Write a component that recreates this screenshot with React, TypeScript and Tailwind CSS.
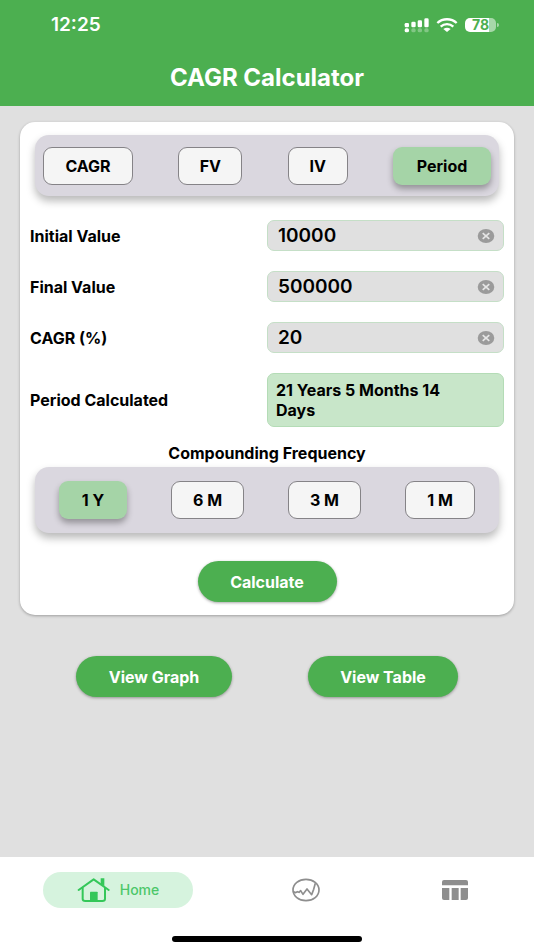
import { useState } from "react";

const fields = [
  { id: "initial", label: "Initial Value", value: "10000" },
  { id: "final", label: "Final Value", value: "500000" },
  { id: "rate", label: "CAGR (%)", value: "20" },
];

const modes = [
  { label: "CAGR", width: "w-[90px]" },
  { label: "FV", width: "w-16" },
  { label: "IV", width: "w-[60px]" },
  { label: "Period", width: "w-[98px]" },
];

const frequencies = [
  { label: "1 Y", width: "w-[68px]" },
  { label: "6 M", width: "w-[73px]" },
  { label: "3 M", width: "w-[73px]" },
  { label: "1 M", width: "w-[70px]" },
];

const panel =
  "flex rounded-[14px] bg-[#dad7df] shadow-[0_5px_8px_rgba(0,0,0,0.28)]";

function Choice({
  label,
  width,
  selected,
  onSelect,
}: {
  label: string;
  width: string;
  selected: boolean;
  onSelect: () => void;
}) {
  const look = selected
    ? "bg-[#a5d4a7] shadow-[0_4px_6px_rgba(0,0,0,0.32)]"
    : "border border-[#858387] bg-[#f5f5f5]";
  return (
    <button
      type="button"
      aria-pressed={selected}
      onClick={onSelect}
      className={`h-[38px] rounded-[9px] ${width} ${look}`}
    >
      {label}
    </button>
  );
}

function Action({ label, width }: { label: string; width: string }) {
  return (
    <button
      type="button"
      className={`h-[41px] rounded-full bg-[#4caf50] text-white shadow-[0_1px_3px_rgba(0,0,0,0.35)] ${width}`}
    >
      {label}
    </button>
  );
}

function Field({ id, label, value }: { id: string; label: string; value: string }) {
  const [text, setText] = useState(value);
  return (
    <div className="grid grid-cols-2 items-center">
      <label htmlFor={id}>{label}</label>
      <div className="flex h-[31px] items-center rounded-[7px] border border-[#c5dfc7] bg-[#e0e0e0] pr-2 pl-[10px]">
        <input
          id={id}
          value={text}
          onChange={(e) => setText(e.target.value)}
          className="w-full min-w-0 bg-transparent text-[19px] leading-6 font-semibold outline-none"
        />
        <button type="button" aria-label={`Clear ${label}`} onClick={() => setText("")}>
          <svg width="18" height="14" viewBox="0 0 18 14">
            <ellipse cx="9" cy="7" rx="8.3" ry="6.9" fill="#9b9b9b" />
            <path d="M5.7 4.2l6.6 5.6M12.3 4.2L5.7 9.8" stroke="#e6e6e6" strokeWidth="1.7" />
          </svg>
        </button>
      </div>
    </div>
  );
}

function StatusBar() {
  return (
    <div className="flex h-[50px] items-center justify-between pr-[35px] pl-[51px] text-white">
      <span className="text-[19px] font-semibold">12:25</span>
      <div className="flex items-center">
        <svg width="26" height="15" viewBox="0 0 78 45" fill="#fff">
          <rect x="2" y="15" width="13" height="13" rx="4" />
          <rect x="22" y="11" width="13" height="17" rx="4" />
          <rect x="41" y="7" width="13" height="21" rx="4" />
          <rect x="61" y="1" width="13" height="27" rx="4" />
          <rect x="2" y="31" width="13" height="12" rx="5" />
          <g opacity="0.3">
            <rect x="22" y="31" width="13" height="12" rx="5" />
            <rect x="41" y="31" width="13" height="12" rx="5" />
            <rect x="61" y="31" width="13" height="12" rx="5" />
          </g>
        </svg>
        <svg className="ml-[6px]" width="22" height="14" viewBox="0 0 66 42">
          <g fill="none" stroke="#fff" strokeWidth="7">
            <path d="M4 15C20 0 46 0 62 15" />
            <path d="M14 26C25 16 41 16 52 26" />
          </g>
          <path d="M22 33Q33 25 44 33L33 42Z" fill="#fff" />
        </svg>
        <div className="ml-[7px] flex h-[14px] w-[31px] items-center justify-center rounded-[5px] bg-linear-to-r from-white from-78% to-[#a7d8a9] to-78% text-sm leading-[14px] font-bold text-[#4caf50]">
          78
        </div>
        <span className="ml-px h-1 w-[2px] rounded-r-full bg-[#a7d8a9]" />
      </div>
    </div>
  );
}

export default function App() {
  const [mode, setMode] = useState("Period");
  const [frequency, setFrequency] = useState("1 Y");

  return (
    <div className="flex min-h-screen flex-col bg-[#e0e0e0] font-[Inter,'Liberation_Sans',sans-serif] text-base leading-5 font-bold text-black">
      <header className="bg-[#4caf50]">
        <StatusBar />
        <h1 className="flex h-14 items-center justify-center text-2xl font-bold text-white">
          CAGR Calculator
        </h1>
      </header>

      <main className="flex-1">
        <section className="mx-5 mt-4 rounded-[15px] bg-white px-[10px] py-[13px] shadow-[0_1px_3px_rgba(0,0,0,0.3)]">
          <div className={`${panel} mx-[5px] h-[61px] items-center justify-between px-2`}>
            {modes.map((m) => (
              <Choice
                key={m.label}
                {...m}
                selected={mode === m.label}
                onSelect={() => setMode(m.label)}
              />
            ))}
          </div>

          <div className="mt-6 flex flex-col gap-5">
            {fields.map((f) => (
              <Field key={f.id} {...f} />
            ))}
            <div className="grid grid-cols-2 items-center">
              <span>Period Calculated</span>
              <output className="block rounded-[7px] border border-[#b4dcb6] bg-[#c8e6c9] py-[6px] pr-8 pl-2">
                21 Years 5 Months 14 Days
              </output>
            </div>
          </div>

          <h2 className="mt-4 mb-1 text-center">Compounding Frequency</h2>
          <div className={`${panel} mx-[5px] h-[66px] items-center justify-around px-[2px]`}>
            {frequencies.map((f) => (
              <Choice
                key={f.label}
                {...f}
                selected={frequency === f.label}
                onSelect={() => setFrequency(f.label)}
              />
            ))}
          </div>

          <div className="mt-7 flex justify-center">
            <Action label="Calculate" width="w-[139px]" />
          </div>
        </section>

        <div className="mt-[41px] flex justify-evenly">
          <Action label="View Graph" width="w-[156px]" />
          <Action label="View Table" width="w-[150px]" />
        </div>
      </main>

      <footer className="flex flex-col items-center bg-white pt-[15px] pb-2">
        <nav className="flex w-full items-center justify-between px-[43px]">
          <button
            type="button"
            className="flex h-9 w-[150px] items-center justify-center gap-[10px] rounded-full bg-[#d6f3de] text-sm font-medium text-[#4cc76a]"
          >
            <svg width="33" height="26" viewBox="135 84 99 78">
              <g fill="none" stroke="#34c759" strokeWidth="6" strokeLinecap="round" strokeLinejoin="round">
                <path d="M140 123L185 91L230 123" />
                <path d="M152 117V150Q152 156 160 156H211Q219 156 219 150V117" />
              </g>
              <path d="M206 88H217V112L206 104Z" fill="#34c759" />
              <rect x="174" y="128" width="23" height="29" rx="2" fill="#34c759" />
            </svg>
            Home
          </button>
          <button type="button" aria-label="Graph" className="flex h-9 w-[72px] items-center justify-center">
            <svg width="30" height="24" viewBox="32 88 90 72" fill="none" stroke="#8e8e8e" strokeWidth="5" strokeLinejoin="round">
              <ellipse cx="77" cy="124" rx="39" ry="32" />
              <path d="M38 128L45 132L51 129L56 131L61 126L68 137L80 121L94 138L100 122L105 104" />
            </svg>
          </button>
          <button type="button" aria-label="Table" className="flex h-9 w-[72px] items-center justify-center">
            <svg width="26" height="20" viewBox="486 93 78 60" fill="#8e8e8e">
              <path d="M486 109V99Q486 93 492 93H558Q564 93 564 99V109Z" />
              <path d="M486 117H508V153H492Q486 153 486 147Z" />
              <path d="M515 117H536V153H515Z" />
              <path d="M542 117H564V147Q564 153 558 153H542Z" />
            </svg>
          </button>
        </nav>
        <div className="mt-7 h-[6px] w-[190px] rounded-full bg-black" />
      </footer>
    </div>
  );
}
